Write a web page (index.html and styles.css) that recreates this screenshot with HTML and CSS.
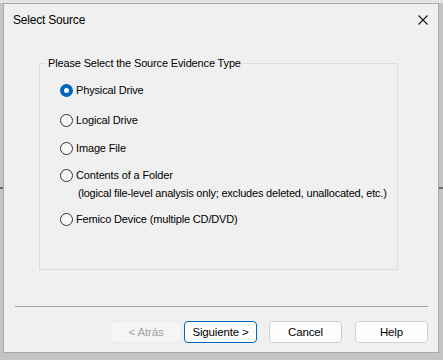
FILE: index.html
```html
<!DOCTYPE html>
<html lang="en">
<head>
<meta charset="utf-8">
<title>Select Source</title>
<link rel="stylesheet" href="styles.css">
</head>
<body>
<div class="window">
  <div class="titlebar">
    <span class="title">Select Source</span>
    <span class="close" aria-label="Close">
      <svg width="10" height="10" viewBox="0 0 10 10"><path d="M0.5 0.5 L9.5 9.5 M9.5 0.5 L0.5 9.5" stroke="#1a1a1a" stroke-width="1.1" fill="none"/></svg>
    </span>
  </div>
  <fieldset class="group">
    <legend class="legend">Please Select the Source Evidence Type</legend>
    <div class="options">
      <label class="opt opt-1"><span class="radio checked"></span><span class="lbl">Physical Drive</span></label>
      <label class="opt opt-2"><span class="radio"></span><span class="lbl">Logical Drive</span></label>
      <label class="opt opt-3"><span class="radio"></span><span class="lbl">Image File</span></label>
      <label class="opt opt-4"><span class="radio"></span><span class="lbl">Contents of a Folder</span></label>
      <div class="sub">(logical file-level analysis only; excludes deleted, unallocated, etc.)</div>
      <label class="opt opt-5"><span class="radio"></span><span class="lbl">Femico Device (multiple CD/DVD)</span></label>
    </div>
  </fieldset>
  <div class="sep"></div>
  <div class="buttons">
    <button class="btn btn-back" disabled>&lt; Atrás</button>
    <button class="btn btn-next">Siguiente &gt;</button>
    <button class="btn btn-cancel">Cancel</button>
    <button class="btn btn-help">Help</button>
  </div>
</div>
</body>
</html>
```

FILE: styles.css
```css
html, body {
  margin: 0;
  padding: 0;
}
body {
  width: 443px;
  height: 360px;
  overflow: hidden;
  background:
    linear-gradient(to bottom, #e4e4e4 0, #e4e4e4 3px, transparent 3px),
    linear-gradient(to bottom, transparent 187px, #6e6e6e 187px, #6e6e6e 189px, transparent 189px),
    #c4c4c4;
  font-family: "Liberation Sans", Arial, sans-serif;
  color: #000;
}
.window {
  margin: 3px 0 0 3px;
  width: 436px;
  height: 350px;
  box-sizing: border-box;
  border: 1px solid #a8a8a8;
  background: #f0f0f0;
  display: flex;
  flex-direction: column;
}
.titlebar {
  height: 31px;
  flex: none;
  display: flex;
  align-items: center;
  justify-content: space-between;
  padding: 0 9px 0 9px;
}
.title {
  font-size: 12px;
  letter-spacing: -0.2px;
  color: #000;
}
.close {
  display: flex;
  width: 10px;
  height: 10px;
  margin-right: 1px;
}
.group {
  margin: 21px 0 0 35px;
  padding: 0;
  width: 359px;
  height: 214px;
  box-sizing: border-box;
  border: 1px solid #dcdcdc;
  min-width: 0;
}
.legend {
  margin-left: 6px;
  padding: 0 2px;
  font-size: 11px;
  line-height: 14px;
  letter-spacing: -0.15px;
}
.options {
  display: flex;
  flex-direction: column;
  padding: 14px 0 0 20px;
  font-size: 11px;
  letter-spacing: -0.15px;
}
.opt {
  display: flex;
  align-items: center;
  height: 13px;
  line-height: 13px;
}
.opt-2 { margin-top: 17px; }
.opt-3 { margin-top: 15px; }
.opt-4 { margin-top: 14px; }
.opt-5 { margin-top: 13px; }
.radio {
  width: 13px;
  height: 13px;
  box-sizing: border-box;
  border: 1px solid #333;
  border-radius: 50%;
  background: #f7f7f7;
  flex: none;
  margin-right: 3px;
}
.radio.checked {
  border: 4px solid #0067c0;
  background: #fff;
}
.sub {
  margin: 5px 0 0 18px;
  line-height: 13px;
  letter-spacing: -0.2px;
}
.sep {
  margin: 36px 10px 0 11px;
  height: 1px;
  background: #a0a0a0;
}
.buttons {
  display: flex;
  justify-content: flex-end;
  padding: 14px 10px 0 0;
}
.btn {
  height: 22px;
  width: 73px;
  box-sizing: border-box;
  border: 1px solid #d0d0d0;
  border-radius: 4px;
  background: #fdfdfd;
  font-family: "Liberation Sans", Arial, sans-serif;
  font-size: 11.5px;
  letter-spacing: -0.15px;
  color: #000;
  padding: 0;
}
.btn-back {
  width: 72px;
  background: #f5f5f5;
  border-color: #e8e8e8;
  color: #a0a0a0;
}
.btn-next {
  margin-left: 2px;
  border-color: #0067c0;
}
.btn-cancel { margin-left: 12px; }
.btn-help { margin-left: 13px; }
```
